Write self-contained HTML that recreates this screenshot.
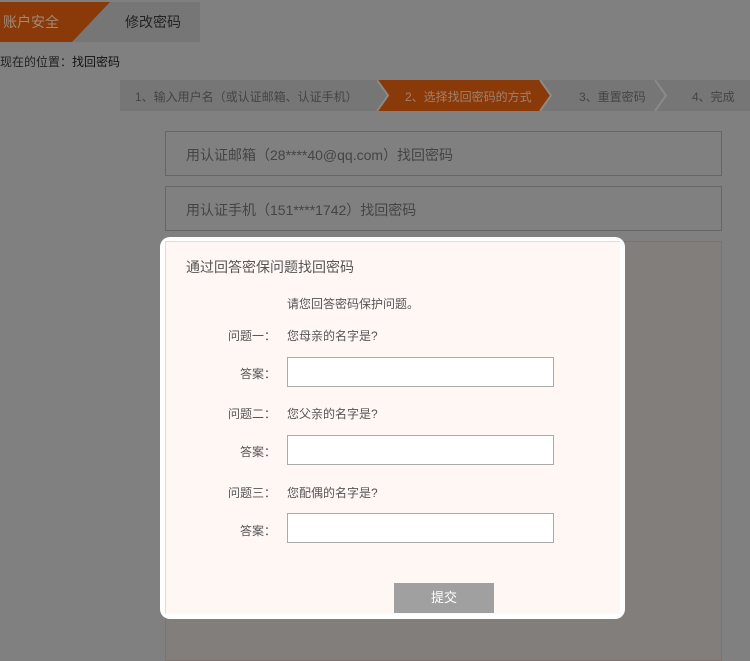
<!DOCTYPE html>
<html><head><meta charset="utf-8"><style>
*{margin:0;padding:0;box-sizing:border-box}
body{width:750px;height:655px;background:#808080;position:relative;overflow:hidden;font-family:"Liberation Sans","Noto Sans CJK SC",sans-serif;font-size:12px;color:#333}
.a{position:absolute}
</style></head><body>
<div class="a" style="left:0;top:2px;width:200px;height:40px;background:#767676"></div>
<svg class="a" style="left:0;top:2px" width="110" height="40"><polygon points="0,0 110,0 72,40 0,40" fill="#8a3a08"/></svg>
<div class="a" style="left:3px;top:12px;font-size:14px;color:#a08a7a">账户安全</div>
<div class="a" style="left:125px;top:12px;font-size:14px;color:#222">修改密码</div>
<div class="a" style="left:0;top:53px;color:#222">现在的位置：<span style="color:#111">找回密码</span></div>
<div class="a" style="left:120px;top:80px;width:630px;height:31px;background:#767676"></div>
<svg class="a" style="left:120px;top:80px" width="630" height="31">
<polygon points="256,0 420,0 431,15.5 420,31 256,31 267,15.5" fill="#8a3a08"/>
<polyline points="257,0 268,15.5 257,31" fill="none" stroke="#8a8a8a" stroke-width="2"/>
<polyline points="420,0 431,15.5 420,31" fill="none" stroke="#8a8a8a" stroke-width="2"/>
<polyline points="535,0 546,15.5 535,31" fill="none" stroke="#8a8a8a" stroke-width="2"/>
</svg>
<div class="a" style="left:135px;top:88px;color:#444">1、输入用户名（或认证邮箱、认证手机）</div>
<div class="a" style="left:405px;top:88px;color:#a08070">2、选择找回密码的方式</div>
<div class="a" style="left:579px;top:88px;color:#444">3、重置密码</div>
<div class="a" style="left:692px;top:88px;color:#444">4、完成</div>
<div class="a" style="left:165px;top:131px;width:557px;height:45px;border:1px solid #666;font-size:14px;color:#444;padding:13px 0 0 20px">用认证邮箱（28****40@qq.com）找回密码</div>
<div class="a" style="left:165px;top:186px;width:557px;height:45px;border:1px solid #666;font-size:14px;color:#444;padding:13px 0 0 20px">用认证手机（151****1742）找回密码</div>
<div class="a" style="left:165px;top:241px;width:557px;height:420px;border:1px solid #84706a;background:#827e7b"></div>
<div class="a" style="left:160px;top:237px;width:465px;height:382px;background:#fff;border-radius:10px"></div>
<div class="a" style="left:165px;top:241px;width:455px;height:373px;background:#fff7f4;border-top:1px solid #f0d8c8;border-left:1px solid #f0d8c8;border-radius:0 0 0 0"></div>
<div class="a" style="left:186px;top:257px;font-size:14px;color:#555">通过回答密保问题找回密码</div>
<div class="a" style="left:287px;top:295px;color:#555">请您回答密码保护问题。</div>
<div class="a" style="left:228px;top:327px;color:#555">问题一：</div><div class="a" style="left:287px;top:327px;color:#555">您母亲的名字是?</div>
<div class="a" style="left:240px;top:365px;color:#555">答案：</div><div class="a" style="left:287px;top:357px;width:267px;height:30px;border:1px solid #aaa;background:#fff"></div>
<div class="a" style="left:228px;top:405px;color:#555">问题二：</div><div class="a" style="left:287px;top:405px;color:#555">您父亲的名字是?</div>
<div class="a" style="left:240px;top:443px;color:#555">答案：</div><div class="a" style="left:287px;top:435px;width:267px;height:30px;border:1px solid #aaa;background:#fff"></div>
<div class="a" style="left:228px;top:484px;color:#555">问题三：</div><div class="a" style="left:287px;top:484px;color:#555">您配偶的名字是?</div>
<div class="a" style="left:240px;top:522px;color:#555">答案：</div><div class="a" style="left:287px;top:513px;width:267px;height:30px;border:1px solid #aaa;background:#fff"></div>
<div class="a" style="left:394px;top:583px;width:100px;height:30px;background:#a0a0a0;color:#fff;text-align:center;line-height:30px;font-size:13px">提交</div>
</body></html>
